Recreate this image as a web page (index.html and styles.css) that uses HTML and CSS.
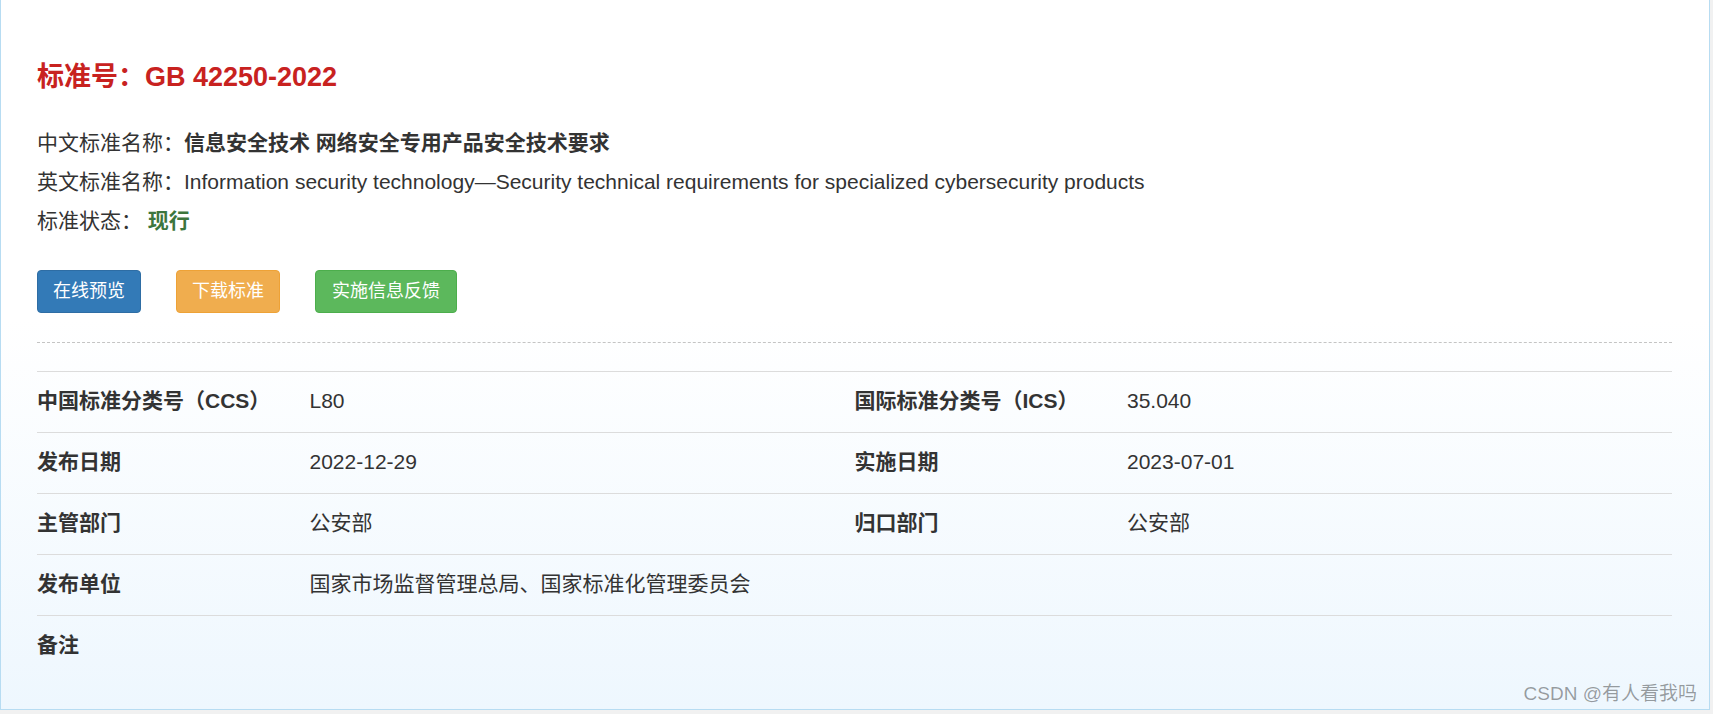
FILE: index.html
```html
<!DOCTYPE html>
<html lang="zh-CN">
<head>
<meta charset="utf-8">
<title>GB 42250-2022</title>
<link rel="stylesheet" href="styles.css">
</head>
<body>
<div class="detail">
  <h1 class="std-no">标准号：GB 42250-2022</h1>
  <div class="names">
    <p class="line">中文标准名称：<b>信息安全技术 网络安全专用产品安全技术要求</b></p>
    <p class="line">英文标准名称：Information security technology—Security technical requirements for specialized cybersecurity products</p>
    <p class="line">标准状态： <b class="status">现行</b></p>
  </div>
  <div class="actions">
    <a class="btn btn-primary">在线预览</a>
    <a class="btn btn-warning">下载标准</a>
    <a class="btn btn-success">实施信息反馈</a>
  </div>
  <hr class="dash">
  <div class="info">
    <div class="row">
      <div class="th">中国标准分类号（CCS）</div><div class="td">L80</div>
      <div class="th">国际标准分类号（ICS）</div><div class="td">35.040</div>
    </div>
    <div class="row">
      <div class="th">发布日期</div><div class="td">2022-12-29</div>
      <div class="th">实施日期</div><div class="td">2023-07-01</div>
    </div>
    <div class="row">
      <div class="th">主管部门</div><div class="td">公安部</div>
      <div class="th">归口部门</div><div class="td">公安部</div>
    </div>
    <div class="row">
      <div class="th">发布单位</div><div class="td">国家市场监督管理总局、国家标准化管理委员会</div>
      <div class="th"></div><div class="td"></div>
    </div>
    <div class="row">
      <div class="th">备注</div><div class="td"></div>
      <div class="th"></div><div class="td"></div>
    </div>
  </div>
  <div class="watermark">CSDN @有人看我吗</div>
</div>
</body>
</html>
```

FILE: styles.css
```css
html, body {
  margin: 0;
  padding: 0;
}
body {
  background: #f1f1f1;
  font-family: "Liberation Sans", "Noto Sans CJK SC", sans-serif;
  color: #333;
}
.detail {
  position: relative;
  box-sizing: border-box;
  width: 1710px;
  border: 1px solid #b7dcf2;
  border-top: none;
  background: linear-gradient(to bottom, #ffffff 0%, #ffffff 45%, #eef7fe 100%);
  padding: 62px 37px 33px 36px;
}
.std-no {
  margin: 0;
  font-size: 27px;
  line-height: 30px;
  font-weight: bold;
  color: #c8221f;
}
.names {
  margin-top: 31px;
}
.line {
  margin: 0;
  font-size: 21px;
  line-height: 39px;
  color: #333;
}
.line b {
  font-weight: bold;
}
.status {
  color: #3c763d;
}
.actions {
  display: flex;
  gap: 35px;
  margin-top: 30px;
}
.btn {
  display: inline-block;
  box-sizing: border-box;
  height: 43px;
  padding: 0 15px;
  border: 1px solid transparent;
  border-radius: 4px;
  font-size: 18px;
  line-height: 41px;
  color: #fff;
  cursor: pointer;
}
.btn-primary {
  background: #337ab7;
  border-color: #2e6da4;
}
.btn-warning {
  background: #f0ad4e;
  border-color: #eea236;
}
.btn-success {
  background: #5cb85c;
  border-color: #4cae4c;
  padding: 0 16px;
}
.dash {
  margin: 29px 0 0;
  border: none;
  border-top: 1px dashed #c4c4c4;
  height: 0;
}
.info {
  margin-top: 28px;
}
.row {
  display: grid;
  grid-template-columns: 1fr 2fr 1fr 2fr;
  border-top: 1px solid #dcdcdc;
  height: 60px;
  align-items: baseline;
  line-height: 58px;
  font-size: 21px;
}
.th {
  font-weight: bold;
  color: #333;
}
.td {
  color: #333;
}
.watermark {
  position: absolute;
  right: 12px;
  bottom: 3px;
  font-size: 19px;
  line-height: 24px;
  color: rgba(0, 0, 0, 0.38);
}
```
